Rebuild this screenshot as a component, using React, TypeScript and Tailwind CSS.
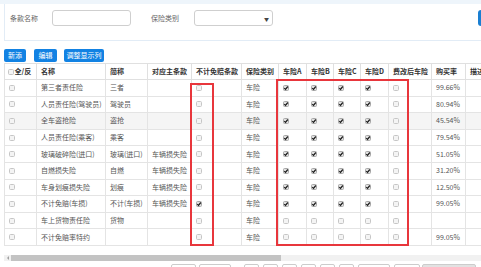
import React from "react";

const Box = ({ checked }: { checked?: boolean }) => (
  <svg width="6" height="6" viewBox="0 0 6 6" className="block">
    <rect x="0.5" y="0.5" width="5" height="5" rx="1" fill={checked ? "#e2e2e2" : "#f4f4f4"} stroke={checked ? "#a8a8a8" : "#c6c6c6"} strokeWidth="1" />
    {checked && <path d="M1.3 3.1 L2.5 4.3 L4.8 1.5" stroke="#1a1a1a" strokeWidth="1.2" fill="none" />}
  </svg>
);

type Row = {
  name: string;
  short: string;
  main: string;
  bj: boolean;
  abcd: boolean;
  rate: string;
};

const rows: Row[] = [
  { name: "第三者责任险", short: "三者", main: "", bj: false, abcd: true, rate: "99.66%" },
  { name: "人员责任险(驾驶员)", short: "驾驶员", main: "", bj: false, abcd: true, rate: "80.94%" },
  { name: "全车盗抢险", short: "盗抢", main: "", bj: false, abcd: true, rate: "45.54%" },
  { name: "人员责任险(乘客)", short: "乘客", main: "", bj: false, abcd: true, rate: "79.54%" },
  { name: "玻璃破碎险(进口)", short: "玻璃(进口)", main: "车辆损失险", bj: false, abcd: true, rate: "51.05%" },
  { name: "自燃损失险", short: "自燃", main: "车辆损失险", bj: false, abcd: true, rate: "31.20%" },
  { name: "车身划痕损失险", short: "划痕", main: "车辆损失险", bj: false, abcd: true, rate: "12.50%" },
  { name: "不计免赔(车损)", short: "不计(车损)", main: "车辆损失险", bj: true, abcd: true, rate: "99.05%" },
  { name: "车上货物责任险", short: "货物", main: "", bj: false, abcd: false, rate: "" },
  { name: "不计免赔率特约", short: "", main: "", bj: false, abcd: false, rate: "99.05%" },
];

const td = "border border-[#e4e4e4] px-[4px] whitespace-nowrap overflow-hidden align-middle";
const th = "border border-[#e0e0e0] px-[4px] whitespace-nowrap overflow-hidden align-middle text-left font-bold text-[#333]";

export default function App() {
  return (
    <div className="w-[481px] h-[267px] overflow-hidden bg-white font-['Noto_Sans_CJK_SC',sans-serif] text-[7px] text-[#555]">
      <div className="h-[4px] bg-[#eef5fb]" />
      <div className="ml-[4px] h-[37px] border-l border-b border-[#e2ecf6] flex items-start pt-[6px] pl-[5px]">
        <span className="w-[42px] shrink-0 leading-[16px] text-[#666]">条款名称</span>
        <div className="w-[79px] h-[16px] shrink-0 border border-[#cfcfcf] rounded-[3px] bg-white" />
        <span className="ml-[20px] w-[43px] shrink-0 leading-[16px] text-[#666]">保险类别</span>
        <div className="w-[79px] h-[16px] shrink-0 border border-[#cfcfcf] rounded-[3px] bg-white flex items-center justify-end pr-[3px]">
          <span className="text-[5px] text-[#444] leading-none">▼</span>
        </div>
        <div className="ml-[205px] w-[30px] h-[16px] shrink-0 rounded-[3px] bg-[#1a7fd2]" />
      </div>

      <div className="mt-[8px] ml-[4px] flex items-center h-[13px] text-white">
        <div className="w-[22px] h-[13px] rounded-[2px] bg-[#1282e3] flex items-center justify-center leading-none">新添</div>
        <div className="ml-[8px] w-[23px] h-[13px] rounded-[2px] bg-[#1282e3] flex items-center justify-center leading-none">编辑</div>
        <div className="ml-[7px] w-[40px] h-[13px] rounded-[2px] bg-[#1282e3] flex items-center justify-center leading-none">调整显示列</div>
      </div>

      <div className="relative mt-[1px] ml-[4px]">
        <table className="table-fixed border-collapse w-[537px] leading-none">
          <colgroup>
            <col className="w-[32px]" />
            <col className="w-[69px]" />
            <col className="w-[42px]" />
            <col className="w-[44px]" />
            <col className="w-[50px]" />
            <col className="w-[37px]" />
            <col className="w-[28px]" />
            <col className="w-[27px]" />
            <col className="w-[27px]" />
            <col className="w-[28px]" />
            <col className="w-[43px]" />
            <col className="w-[34px]" />
            <col className="w-[76px]" />
          </colgroup>
          <thead>
            <tr className="h-[16px]">
              <th className={th + " pl-[3px]"}>
                <div className="flex items-center gap-[0.5px]">
                  <Box />
                  <span>全/反</span>
                </div>
              </th>
              <th className={th}>名称</th>
              <th className={th}>简称</th>
              <th className={th}>对应主条款</th>
              <th className={th}>不计免赔条款</th>
              <th className={th}>保险类别</th>
              <th className={th + " px-[3px]"}>车险A</th>
              <th className={th + " px-[3px]"}>车险B</th>
              <th className={th + " px-[3px]"}>车险C</th>
              <th className={th + " px-[3px]"}>车险D</th>
              <th className={th}>费改后车险</th>
              <th className={th}>购买率</th>
              <th className={th}>描述</th>
            </tr>
          </thead>
          <tbody>
            {rows.map((r, i) => (
              <tr key={i} className={"h-[16.6px] " + (i === 2 ? "bg-[#f5f5f5]" : "bg-white")}>
                <td className={td}><Box /></td>
                <td className={td}>{r.name}</td>
                <td className={td}>{r.short}</td>
                <td className={td}>{r.main}</td>
                <td className={td}><Box checked={r.bj} /></td>
                <td className={td}>车险</td>
                <td className={td + " px-[3px]"}><Box checked={r.abcd} /></td>
                <td className={td + " px-[3px]"}><Box checked={r.abcd} /></td>
                <td className={td + " px-[3px]"}><Box checked={r.abcd} /></td>
                <td className={td + " px-[3px]"}><Box checked={r.abcd} /></td>
                <td className={td}><Box /></td>
                <td className={td}>{r.rate}</td>
                <td className={td}></td>
              </tr>
            ))}
          </tbody>
        </table>
        <div className="absolute left-[186px] top-[20px] w-[24px] h-[163px] border-2 border-[#e8363c]" />
        <div className="absolute left-[272px] top-[16px] w-[133px] h-[167px] border-2 border-[#e8363c]" />
      </div>

      <div className="mt-[9px] ml-[4px] h-[6px] bg-[#f1f1f1] flex items-center">
        <div className="w-[7px] flex items-center justify-center">
          <div className="w-0 h-0 border-y-[2px] border-y-transparent border-r-[2px] border-r-[#a0a0a0]" />
        </div>
        <div className="w-[270px] h-[6px] bg-[#c3c3c3]" />
      </div>

      <div className="mt-[3px] ml-[171px] flex items-start text-[#555]">
        <div className="w-[25px] h-[14px] border border-[#ccc] rounded-[2px] flex justify-center pt-[3px]">首页</div>
        <div className="ml-[3px] w-[32px] h-[14px] border border-[#ccc] rounded-[2px] flex justify-center pt-[3px]">上一页</div>
        <div className="ml-[13px] w-[15px] h-[14px] border border-[#ccc] rounded-[2px] flex justify-center pt-[3px]">1</div>
        <div className="ml-[4px] w-[15px] h-[14px] border border-[#ccc] rounded-[2px] flex justify-center pt-[3px]">2</div>
        <div className="ml-[4px] w-[15px] h-[14px] border border-[#ccc] rounded-[2px] flex justify-center pt-[3px]">3</div>
        <div className="ml-[4px] w-[15px] h-[14px] border border-[#ccc] rounded-[2px] flex justify-center pt-[3px]">4</div>
        <div className="ml-[4px] w-[15px] h-[14px] border border-[#ccc] rounded-[2px] flex justify-center pt-[3px]">5</div>
        <div className="ml-[4px] w-[15px] h-[14px] border border-[#ccc] rounded-[2px] flex justify-center pt-[3px]">6</div>
        <div className="ml-[4px] w-[32px] h-[14px] border border-[#ccc] rounded-[2px] flex justify-center pt-[3px]">下一页</div>
        <div className="ml-[4px] w-[26px] h-[14px] border border-[#ccc] rounded-[2px] flex justify-center pt-[3px]">尾页</div>
        <div className="ml-[2px] w-[54px] h-[14px] border border-[#ccc] rounded-[2px] bg-[#e2e2e2] flex justify-center pt-[3px] shrink-0">共10条记录</div>
      </div>
    </div>
  );
}
